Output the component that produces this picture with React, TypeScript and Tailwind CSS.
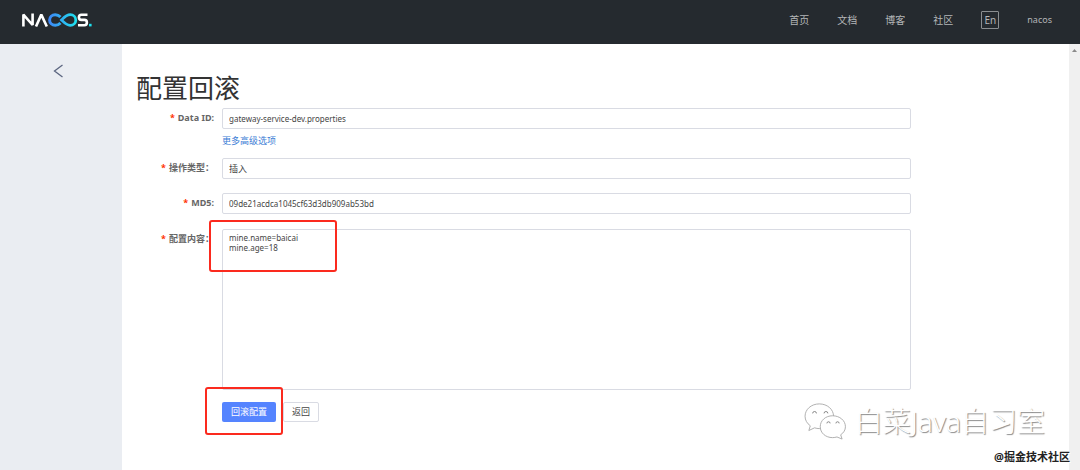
import type { ReactNode } from "react";

const NAV = ["首页", "文档", "博客", "社区"];

const FIELD = "block w-full rounded-[2px] border border-[#d9dbe3] bg-white px-[6px] text-[#444] outline-none";

function Logo() {
  return (
    <svg width="70" height="16" viewBox="0 0 70 16" fill="none" aria-label="NACOS">
      <defs>
        <linearGradient id="loop" x1="26" y1="0" x2="54" y2="0" gradientUnits="userSpaceOnUse">
          <stop offset="0" stopColor="#3f84f7" />
          <stop offset="1" stopColor="#1fe0ee" />
        </linearGradient>
      </defs>
      <g stroke="#fff" strokeWidth="2.6" strokeLinejoin="bevel">
        <path d="M1.400 14.500V2.600L10.600 13V1.500" />
        <path d="M14 14.500L19.300 2.600L24.800 14.500" />
        <path d="M65.500 2.800H59.400Q56.900 2.800 56.900 5.300Q56.900 7.900 59.400 7.900H62.400Q64.900 7.900 64.900 10.600Q64.900 13.200 62.400 13.200H56" />
      </g>
      <path
        d="M38.500 5C37 3.500 35.400 2.700 33.200 2.700C30 2.700 27.600 5 27.600 8C27.600 11 30 13.300 33.200 13.300C35.400 13.300 37 12.500 38.500 11"
        stroke="url(#loop)"
        strokeWidth="3"
      />
      <path
        d="M39.500 8C42.500 5 44.500 2.700 48.200 2.700C51.400 2.700 53.800 5 53.800 8C53.800 11 51.400 13.300 48.200 13.300C44.500 13.300 42.500 11 39.500 8Z"
        stroke="url(#loop)"
        strokeWidth="2.800"
      />
      <rect x="67" y="11.800" width="2.600" height="2.600" fill="#1fe0ee" />
    </svg>
  );
}

function Row({ id, label, className, children }: { id: string; label: string; className: string; children: ReactNode }) {
  return (
    <div className={`grid grid-cols-[78px_minmax(0,1fr)] gap-x-2 ${className}`}>
      <label htmlFor={id} className="h-5 text-right text-[9px] font-bold leading-5 whitespace-nowrap text-[#666]">
        <span className="mr-[3px] text-[#ff3000]">*</span>
        {label}
      </label>
      <div className="relative">{children}</div>
    </div>
  );
}

function WeChat() {
  return (
    <svg width="44" height="38" viewBox="0 0 46 40" fill="#fff" stroke="#a3a3a3" strokeWidth="0.9">
      <path d="M17 2C8.500 2 2 7.800 2 15C2 19 4 22.500 7.500 25L6 30L12 27.200C13.600 27.700 15.300 28 17 28C25.500 28 32 22.200 32 15C32 7.800 25.500 2 17 2Z" />
      <path d="M31 14.500C23.500 14.500 18 19.500 18 26C18 32.500 23.500 37.500 31 37.500C32.600 37.500 34.200 37.200 35.600 36.800L41 39L39.500 34.500C42.600 32.500 44.500 29.500 44.500 26C44.500 19.500 38.500 14.500 31 14.500Z" />
      <path
        fill="none"
        stroke="#777"
        d="M10 12A2 2 0 0 1 14 12M22 12A2 2 0 0 1 26 12M25 22.500A1.700 1.700 0 0 1 28.400 22.500M34.500 22.500A1.700 1.700 0 0 1 37.900 22.500"
      />
    </svg>
  );
}

export default function App() {
  return (
    <div className="flex min-h-screen flex-col bg-white font-['Noto_Sans','Noto_Sans_CJK_SC',sans-serif] text-[#333]">
      <header className="flex h-11 items-center justify-between bg-[#252a2f] pr-7 pl-[22px] text-[#b4b6b8]">
        <a href="#home" className="-mt-1">
          <Logo />
        </a>
        <nav className="-mt-1 flex items-center gap-7 text-[10px] leading-5">
          {NAV.map((item) => (
            <a key={item} href={`#${item}`}>
              {item}
            </a>
          ))}
          <button className="h-[18px] w-[18px] rounded-[1px] border border-[#8b8e91] text-[10px] leading-4">En</button>
          <a href="#user" className="text-[9px]">
            nacos
          </a>
        </nav>
      </header>
      <div className="flex flex-1">
        <aside className="w-[122px] shrink-0 bg-[#eaedf2]">
          <button aria-label="返回上一级" className="mt-5 ml-[53px] block">
            <svg width="11" height="14" viewBox="0 0 11 14" fill="none" stroke="#5c6680" strokeWidth="1.3">
              <path d="M9.500 1L1.500 7L9.500 13" />
            </svg>
          </button>
        </aside>
        <main className="relative min-w-0 flex-1 pt-7 pr-[158px] pl-[14px]">
          <h1 className="h-9 text-[26px] leading-8 font-normal">配置回滚</h1>
          <Row id="dataId" label="Data ID:" className="mb-[9px]">
            <input
              id="dataId"
              readOnly
              defaultValue="gateway-service-dev.properties"
              className={`${FIELD} h-[21px] text-[8px]`}
            />
            <a href="#more" className="mt-1 block text-[9px] leading-4 text-[#3a7cd5]">
              更多高级选项
            </a>
          </Row>
          <Row id="opType" label="操作类型：" className="mb-[14px]">
            <input id="opType" readOnly defaultValue="插入" className={`${FIELD} h-[21px] text-[9px]`} />
          </Row>
          <Row id="md5" label="MD5:" className="mb-[15px]">
            <input
              id="md5"
              readOnly
              defaultValue="09de21acdca1045cf63d3db909ab53bd"
              className={`${FIELD} h-[21px] text-[8px]`}
            />
          </Row>
          <Row id="content" label="配置内容：" className="mb-3">
            <textarea
              id="content"
              readOnly
              defaultValue={"mine.name=baicai\nmine.age=18"}
              className={`${FIELD} h-[161px] resize-none py-[3px] text-[8px] leading-[10px]`}
            />
            <div className="pointer-events-none absolute -top-[9px] -left-[13px] h-[52px] w-32 rounded-[3px] border-2 border-[#fb2a1e]" />
          </Row>
          <div className="relative flex gap-[7px] pl-[86px] text-[9px]">
            <button className="h-5 rounded-[2px] bg-[#5584ff] px-[9px] text-white">回滚配置</button>
            <button className="h-5 rounded-[2px] border border-[#d9dbe3] bg-white px-2 text-[#444]">返回</button>
            <div className="pointer-events-none absolute -top-[15px] left-[69px] h-12 w-[78px] rounded-[3px] border-2 border-[#fb2a1e]" />
          </div>
          <div className="absolute right-6 bottom-[30px] flex items-center gap-2">
            <WeChat />
            <span className="text-[28px] leading-9 font-light whitespace-nowrap text-white [text-shadow:1px_1px_1px_#888]">
              白菜Java自习室
            </span>
          </div>
        </main>
        <div className="relative w-[11px] shrink-0 bg-[#f0f0f0]">
          <svg className="mx-auto mt-1" width="5" height="4" viewBox="0 0 5 4" fill="#8a8a8a">
            <path d="M0 4L2.500 1L5 4Z" />
          </svg>
          <span className="absolute right-[10px] bottom-[5px] text-[11px] leading-4 font-bold whitespace-nowrap text-[#222] [text-shadow:1px_1px_0_#fff]">
            @掘金技术社区
          </span>
        </div>
      </div>
    </div>
  );
}
